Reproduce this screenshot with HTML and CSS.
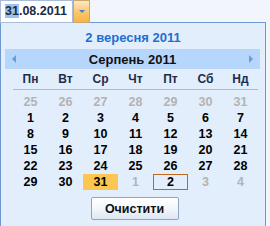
FILE: index.html
```html
<!DOCTYPE html>
<html lang="uk">
  <head>
    <meta charset="UTF-8" />
    <title>Календар</title>
    <link rel="stylesheet" href="styles.css">
  </head>
  <body>
    <div class="combo">
      <div class="date-input"><span class="sel">31</span>.08.2011</div>
      <div class="drop"><span class="drop-arrow"></span></div>
    </div>
    <div class="popup">
      <div class="today">2 вересня 2011</div>
      <div class="month-bar">
        <span class="arrow-left"></span>
        <span class="month">Серпень 2011</span>
        <span class="arrow-right"></span>
      </div>
      <div class="grid">
        <div class="dow">Пн</div>
        <div class="dow">Вт</div>
        <div class="dow">Ср</div>
        <div class="dow">Чт</div>
        <div class="dow">Пт</div>
        <div class="dow">Сб</div>
        <div class="dow">Нд</div>

        <div class="day other">25</div>
        <div class="day other">26</div>
        <div class="day other">27</div>
        <div class="day other">28</div>
        <div class="day other">29</div>
        <div class="day other">30</div>
        <div class="day other">31</div>

        <div class="day">1</div>
        <div class="day">2</div>
        <div class="day">3</div>
        <div class="day">4</div>
        <div class="day">5</div>
        <div class="day">6</div>
        <div class="day">7</div>

        <div class="day">8</div>
        <div class="day">9</div>
        <div class="day">10</div>
        <div class="day">11</div>
        <div class="day">12</div>
        <div class="day">13</div>
        <div class="day">14</div>

        <div class="day">15</div>
        <div class="day">16</div>
        <div class="day">17</div>
        <div class="day">18</div>
        <div class="day">19</div>
        <div class="day">20</div>
        <div class="day">21</div>

        <div class="day">22</div>
        <div class="day">23</div>
        <div class="day">24</div>
        <div class="day">25</div>
        <div class="day">26</div>
        <div class="day">27</div>
        <div class="day">28</div>

        <div class="day">29</div>
        <div class="day">30</div>
        <div class="day selected">31</div>
        <div class="day other">1</div>
        <div class="day current">2</div>
        <div class="day other">3</div>
        <div class="day other">4</div>
      </div>
      <div class="actions">
        <button class="clear-btn" type="button">Очистити</button>
      </div>
    </div>
  </body>
</html>
```

FILE: styles.css
```css
body {
  margin: 0;
  background-color: #f2f6fc;
  font-family: "Liberation Sans", Arial, sans-serif;
  font-weight: bold;
  overflow: hidden;
}

.combo {
  display: flex;
  height: 23px;
}

.date-input {
  width: 73px;
  height: 23px;
  box-sizing: border-box;
  border: 1px solid #a8bbd8;
  background-color: #fff;
  color: #1b2a44;
  font-size: 12.5px;
  line-height: 21px;
  padding-left: 4px;
}

.sel {
  background-color: #9cc3ee;
}

.drop {
  width: 17px;
  height: 23px;
  box-sizing: border-box;
  border: 1px solid #c9a86e;
  background: linear-gradient(#fde9c2, #fbc56a 55%, #f8b447);
  display: flex;
  align-items: center;
  justify-content: center;
}

.drop-arrow {
  width: 0;
  height: 0;
  border-left: 3px solid transparent;
  border-right: 3px solid transparent;
  border-top: 3px solid #4a7ec8;
}

.popup {
  width: 266px;
  height: 205px;
  margin-top: -1px;
  box-sizing: border-box;
  border: 1px solid #6d98d4;
  border-bottom: none;
  background-color: #e3eefc;
  padding-top: 7px;
}

.today {
  text-align: center;
  color: #1e6fd2;
  font-size: 13px;
  line-height: 16px;
}

.month-bar {
  display: flex;
  align-items: center;
  height: 20px;
  margin: 3px 5px 0 4px;
  background-color: #b7d6fc;
  padding: 0 7px;
}

.month {
  flex: 1;
  text-align: center;
  font-size: 13px;
  color: #111;
}

.arrow-left {
  width: 0;
  height: 0;
  border-top: 4px solid transparent;
  border-bottom: 4px solid transparent;
  border-right: 4px solid #6b9bd9;
}

.arrow-right {
  width: 0;
  height: 0;
  border-top: 4px solid transparent;
  border-bottom: 4px solid transparent;
  border-left: 4px solid #6b9bd9;
}

.grid {
  display: grid;
  grid-template-columns: repeat(7, 35px);
  grid-template-rows: 25px repeat(6, 16px);
  margin-left: 12px;
}

.dow {
  align-self: start;
  height: 20px;
  line-height: 20px;
  text-align: center;
  font-size: 12px;
  color: #1c2d4c;
  border-bottom: 1px solid #9bbde8;
}

.day {
  text-align: center;
  font-size: 12.5px;
  line-height: 16px;
  color: #000;
}

.day.other {
  color: #b3b3b3;
}

.day.selected {
  background-color: #fbc751;
}

.day.current {
  box-sizing: border-box;
  border: 1px solid #c3661f;
  line-height: 14px;
}

.actions {
  display: flex;
  justify-content: center;
  padding-left: 3px;
  margin-top: 7px;
}

.clear-btn {
  width: 88px;
  height: 23px;
  border: 1px solid #8ea4c4;
  border-radius: 2px;
  background: linear-gradient(#ffffff, #f3f6fb 50%, #dde6f2);
  font-family: "Liberation Sans", Arial, sans-serif;
  font-weight: bold;
  font-size: 12.5px;
  color: #111;
  padding: 0;
}
```
